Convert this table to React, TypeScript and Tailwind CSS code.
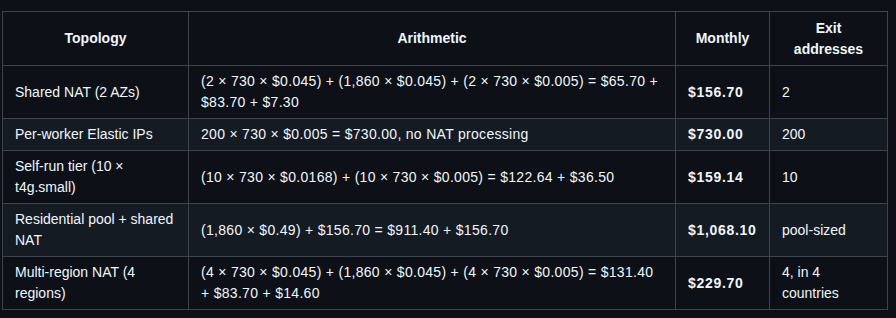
const rows = [
  {
    topology: "Shared NAT (2 AZs)",
    arithmetic: "(2 × 730 × $0.045) + (1,860 × $0.045) + (2 × 730 × $0.005) = $65.70 + $83.70 + $7.30",
    monthly: "$156.70",
    exits: "2",
  },
  {
    topology: "Per-worker Elastic IPs",
    arithmetic: "200 × 730 × $0.005 = $730.00, no NAT processing",
    monthly: "$730.00",
    exits: "200",
  },
  {
    topology: "Self-run tier (10 × t4g.small)",
    arithmetic: "(10 × 730 × $0.0168) + (10 × 730 × $0.005) = $122.64 + $36.50",
    monthly: "$159.14",
    exits: "10",
  },
  {
    topology: "Residential pool + shared NAT",
    arithmetic: "(1,860 × $0.49) + $156.70 = $911.40 + $156.70",
    monthly: "$1,068.10",
    exits: "pool-sized",
  },
  {
    topology: "Multi-region NAT (4 regions)",
    arithmetic: "(4 × 730 × $0.045) + (1,860 × $0.045) + (4 × 730 × $0.005) = $131.40 + $83.70 + $14.60",
    monthly: "$229.70",
    exits: "4, in 4 countries",
  },
];

export default function App() {
  return (
    <div className="w-[896px] h-[318px] bg-[#0d1117] pt-[11px] pl-[2px] font-['Liberation_Sans',Arial,sans-serif] text-[14px] leading-[21px] text-[#f0f6fc]">
      <table className="border-collapse table-fixed w-[885px]">
        <colgroup>
          <col className="w-[186px]" />
          <col className="w-[487px]" />
          <col className="w-[94px]" />
          <col className="w-[118px]" />
        </colgroup>
        <thead>
          <tr className="bg-[#0d1117] h-[54px]">
            <th className="border border-[#3d444d] px-3 font-bold text-center">Topology</th>
            <th className="border border-[#3d444d] px-3 font-bold text-center">Arithmetic</th>
            <th className="border border-[#3d444d] px-3 font-bold text-center">Monthly</th>
            <th className="border border-[#3d444d] px-3 font-bold text-center">Exit addresses</th>
          </tr>
        </thead>
        <tbody>
          {rows.map((r, i) => (
            <tr key={r.topology} className={i % 2 === 1 ? "bg-[#151b23]" : "bg-[#0d1117]"}>
              <td className="border border-[#3d444d] px-3 py-[5px] align-middle">{r.topology}</td>
              <td className="border border-[#3d444d] px-3 py-[5px] align-middle tracking-[0.3px]">{r.arithmetic}</td>
              <td className="border border-[#3d444d] px-3 py-[5px] align-middle font-bold tracking-[0.7px]">{r.monthly}</td>
              <td className="border border-[#3d444d] px-3 py-[5px] align-middle">{r.exits}</td>
            </tr>
          ))}
        </tbody>
      </table>
    </div>
  );
}
